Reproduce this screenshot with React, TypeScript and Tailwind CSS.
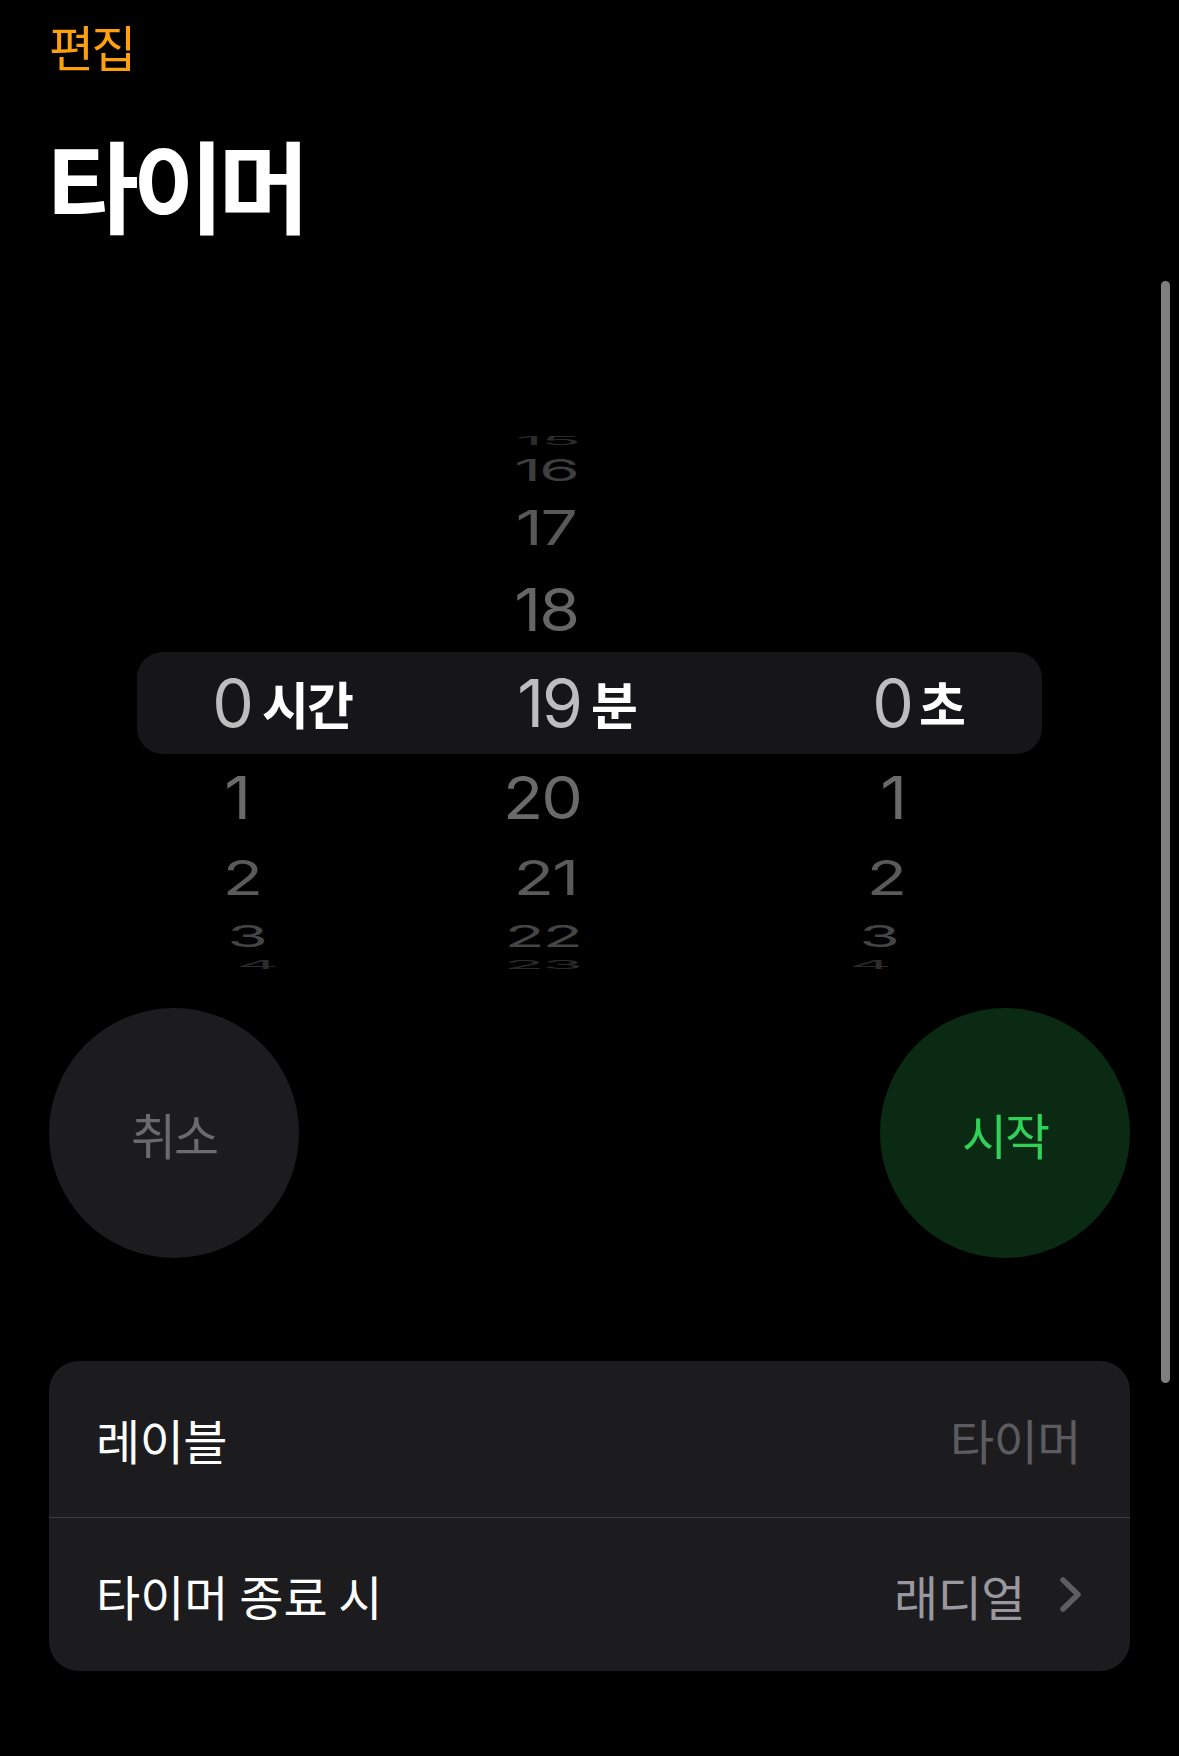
import React from 'react';

const KR = "font-['Noto_Sans_CJK_KR','Noto_Sans',sans-serif]";
const NUM = "font-['Inter','Noto_Sans_CJK_KR',sans-serif]";

// drum slots from -4..+4 around the selected row
const SLOT_H = [12, 46, 70, 92, 96, 92, 70, 46, 12];
const SCALE = [0.17, 0.46, 0.72, 0.9, 1, 0.9, 0.72, 0.46, 0.17];
const COLOR = ['#2b2b2b', '#3e3e3e', '#585858', '#666666', '#bdbdbd', '#6a6a6a', '#5a5a5a', '#454545', '#2b2b2b'];

type Col = { values: (number | null)[]; shift: number[]; label: string; labelGap: string; gap: string };

const columns: Col[] = [
  { values: [null, null, null, null, 0, 1, 2, 3, 4], shift: [0, 0, 0, 0, 0, -3, 9, 14, 25], label: '시간', labelGap: 'ml-[10px]', gap: 'ml-[132px]' },
  { values: [15, 16, 17, 18, 19, 20, 21, 22, 23], shift: [-2, -3, -5, -3, 0, 0, -4, 0, 0], label: '분', labelGap: 'ml-[10px]', gap: 'ml-[99px]' },
  { values: [null, null, null, null, 0, 1, 2, 3, 4], shift: [0, 0, 0, 0, 0, -7, -7, -14, -22], label: '초', labelGap: 'ml-[7px]', gap: 'ml-[101px]' },
];

function Wheel({ col }: { col: Col }) {
  return (
    <div className={`flex ${col.gap}`}>
      <div className="flex w-[120px] flex-col justify-center">
        {col.values.map((v, i) => (
          <div key={i} className="flex items-center justify-end" style={{ height: SLOT_H[i] }}>
            <span
              className={`${NUM} text-[66px] leading-none tracking-[-0.03em]`}
              style={{ color: COLOR[i], transform: `translateX(${col.shift[i]}px) scaleY(${SCALE[i]})` }}
            >
              {v ?? ''}
            </span>
          </div>
        ))}
      </div>
      <div className={`${col.labelGap} w-[100px] self-center ${KR} text-[51px] leading-none font-semibold tracking-[-0.04em] text-white`}>
        {col.label}
      </div>
    </div>
  );
}

function Chevron() {
  return (
    <svg width="24" height="37" viewBox="0 0 24 37" fill="none">
      <path d="M4 4 L19 18.5 L4 33" stroke="#5d5d62" strokeWidth="5.5" strokeLinecap="round" strokeLinejoin="round" />
    </svg>
  );
}

export default function App() {
  return (
    <div className={`relative h-[1756px] w-[1179px] overflow-hidden bg-black ${KR}`}>
      <div className="pl-[49px] pt-[16px] h-[80px]">
        <div className="text-[49px] leading-[60px] tracking-[-0.06em] text-[#ff9f0a]">편집</div>
      </div>

      <div className="pl-[47px] mt-[38px] h-[130px]">
        <h1 className="text-[100px] leading-[130px] font-bold tracking-[-0.065em] text-white">타이머</h1>
      </div>

      {/* picker */}
      <div className="relative mt-[187px] h-[536px] overflow-hidden">
        <div className="absolute inset-x-[137px] top-1/2 h-[102px] -translate-y-1/2 rounded-[26px] bg-[#161618]" />
        <div className="relative flex h-full">
          {columns.map((c, i) => (
            <Wheel key={i} col={c} />
          ))}
        </div>
      </div>

      {/* buttons */}
      <div className="mt-[37px] flex justify-between px-[49px]">
        <div className="flex h-[250px] w-[250px] items-center justify-center rounded-full bg-[#1c1c1e]">
          <span className="text-[49px] leading-none tracking-[-0.04em] text-[#6b6b6f]">취소</span>
        </div>
        <div className="flex h-[250px] w-[250px] items-center justify-center rounded-full bg-[#0a2a13]">
          <span className="text-[49px] leading-none tracking-[-0.04em] text-[#30d158]">시작</span>
        </div>
      </div>

      {/* settings card */}
      <div className="mx-[49px] mt-[103px] overflow-hidden rounded-[30px] bg-[#1c1c1e]">
        <div className="flex h-[156px] items-center justify-between pl-[47px] pr-[49px]">
          <span className="text-[48px] leading-none tracking-[-0.01em] text-white">레이블</span>
          <span className="text-[48px] leading-none tracking-[-0.01em] text-[#5c5c60]">타이머</span>
        </div>
        <div className="h-px bg-[#3d3d3f]" />
        <div className="flex h-[153px] items-center justify-between pl-[47px] pr-[47px]">
          <span className="text-[48px] leading-none tracking-[0em] text-white">타이머 종료 시</span>
          <div className="flex items-center gap-[34px]">
            <span className="text-[48px] leading-none tracking-[-0.01em] text-[#98989e]">래디얼</span>
            <Chevron />
          </div>
        </div>
      </div>

      {/* scroll indicator */}
      <div className="absolute left-[1161px] top-[281px] h-[1102px] w-[9px] rounded-full bg-[#7f7f7f]" />
    </div>
  );
}
